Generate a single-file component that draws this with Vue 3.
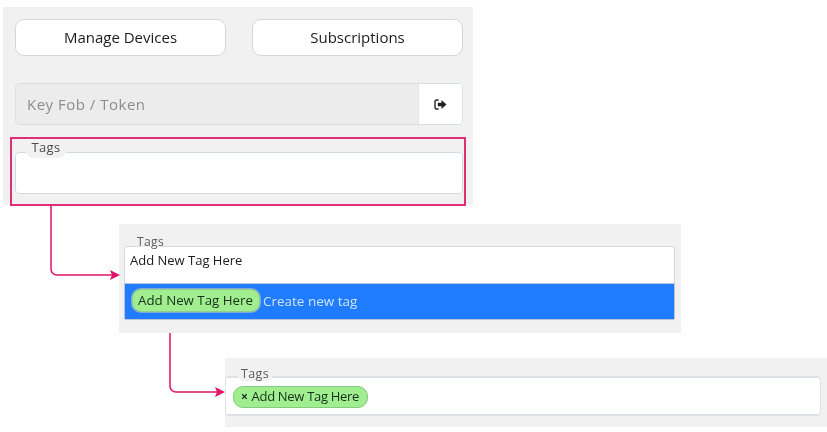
<script setup>
const tag = 'Add New Tag Here'
</script>

<template>
  <div class="page">
    <section class="panel panel-a">
      <div class="btn-row">
        <button class="btn">Manage Devices</button>
        <button class="btn">Subscriptions</button>
      </div>
      <div class="group">
        <div class="token">Key Fob / Token</div>
        <div class="addon">
          <svg width="13" height="11" viewBox="0 0 13 11">
            <path d="M4.600 1H2.600C1.600 1 1 1.700 1 2.600v5.800C1 9.300 1.600 10 2.600 10h2" fill="none" stroke="#222" stroke-width="1.400" />
            <path d="M3.800 3.700h3.700V1l5 4.500-5 4.500V7.300H3.800z" fill="#222" />
          </svg>
        </div>
      </div>
      <fieldset class="tags tags-a">
        <legend>Tags</legend>
      </fieldset>
    </section>

    <section class="panel panel-b">
      <fieldset class="tags tags-b">
        <legend>Tags</legend>
        <div class="typed">{{ tag }}</div>
      </fieldset>
      <div class="option">
        <span class="chip chip-hi">{{ tag }}</span>
        <span>Create new tag</span>
      </div>
    </section>

    <section class="panel panel-c">
      <fieldset class="tags tags-c">
        <legend>Tags</legend>
        <span class="chip chip-final"><b>×</b>{{ tag }}</span>
      </fieldset>
    </section>

    <div class="highlight"></div>
    <svg class="wires" width="827" height="432" viewBox="0 0 827 432">
      <path d="M51 206V269a6 6 0 0 0 6 6H112" />
      <path class="head" d="M110 270l10 5-10 5 2-5z" />
      <path d="M170 333V386a6 6 0 0 0 6 6H217" />
      <path class="head" d="M215 387l10 5-10 5 2-5z" />
    </svg>
  </div>
</template>

<style scoped>
.page {
  position: relative;
  width: 827px;
  height: 432px;
  overflow: hidden;
  background: #fff;
  font-family: "Open Sans", sans-serif;
  filter: blur(0.4px);
}
.panel { background: #f1f1f1; box-sizing: border-box; }
.panel-a {
  width: 470px;
  height: 198px;
  margin: 7px 0 0 3px;
  padding: 12px 10px 0 12px;
  display: flow-root;
}
.btn-row { display: flex; justify-content: space-between; }
.btn {
  width: 211px;
  height: 37px;
  padding: 0 0 2px;
  background: #fff;
  border: 1px solid #d3d7dc;
  border-radius: 9px;
  font: 15px "Open Sans", sans-serif;
  color: #1c1c1c;
}
.group {
  display: flex;
  height: 42px;
  margin-top: 27px;
  box-sizing: border-box;
  border: 1px solid #d8dee4;
  border-radius: 5px;
  overflow: hidden;
}
.token {
  flex: 1;
  background: #ececec;
  color: #8d8d8d;
  font-size: 15px;
  letter-spacing: 0.5px;
  line-height: 40px;
  padding-left: 11px;
}
.addon {
  width: 43px;
  background: #fff;
  border-left: 1px solid #e4e6e8;
  display: flex;
  align-items: center;
  justify-content: center;
}
.tags {
  position: relative;
  margin: 0;
  padding: 0;
  box-sizing: border-box;
  background: #fff;
  border: 1px solid #d2d9e1;
  border-radius: 4px;
  min-width: 0;
}
legend {
  position: absolute;
  font-size: 13px;
  letter-spacing: 0.4px;
  color: #4a4a4a;
  background: #f1f1f1;
  padding: 0;
  border-radius: 0 0 9px 9px;
  text-align: center;
}
.tags-a { height: 42px; margin-top: 27px; }
.tags-a legend { left: 9px; top: -12px; width: 42px; height: 17px; line-height: 12px; }
.panel-b {
  width: 562px;
  height: 109px;
  margin: 19px 0 0 119px;
  padding: 22px 6px 0 5px;
}
.tags-b { height: 37px; padding: 5px 5px 0; border-radius: 3px 3px 0 0; border-bottom: 0; }
.tags-b legend { left: 8px; top: -11px; width: 35px; height: 11px; font-size: 12px; line-height: 12px; color: #5c5c5c; }
.typed { font-size: 13px; line-height: 17px; color: #1c1c1c; }
.option {
  height: 37px;
  box-sizing: border-box;
  display: flex;
  align-items: center;
  gap: 3px;
  padding: 0 0 2px 7px;
  background: #207cff;
  border: 1px solid #b8c4d2;
  border-top-color: #b9cbe4;
  border-radius: 0 0 2px 2px;
  color: #cfe2ff;
  font-size: 13.500px;
}
.chip {
  display: inline-block;
  box-sizing: border-box;
  background: #a0ee90;
  color: #16301a;
  white-space: nowrap;
}
.chip-hi {
  height: 23px;
  line-height: 21px;
  padding: 0 6px 0 5px;
  border-radius: 9px;
  border: 1px solid #8fcf8b;
  box-shadow: 0 0 0 1px #7ea9d8;
  font-size: 13.300px;
}
.panel-c {
  width: 602px;
  height: 69px;
  margin: 25px 0 0 225px;
  padding: 18px 6px 0 0;
}
.tags-c {
  display: flex;
  align-items: flex-start;
  height: 40px;
  padding: 8px 0 0 7px;
  border-width: 2px 1px 2px 1px;
  border-color: #dde1e6;
}
.tags-c legend { left: 10px; top: -11px; width: 38px; height: 14px; font-size: 12.500px; line-height: 14px; color: #5c5c5c; }
.chip-final {
  height: 22px;
  line-height: 19px;
  padding: 0 8px 0 7px;
  border-radius: 10px;
  border: 1px solid #84cc7d;
  font-size: 13px;
  letter-spacing: -0.3px;
}
.chip-final b { margin-right: 4px; font-size: 12px; font-weight: 700; }
.highlight {
  position: absolute;
  left: 10px;
  top: 137px;
  width: 456px;
  height: 69px;
  box-sizing: border-box;
  border: 2px solid #de2f76;
}
.wires { position: absolute; left: 0; top: 0; }
.wires path { fill: none; stroke: #e0126a; stroke-width: 1.500; }
.wires path.head { fill: #e0126a; stroke: none; }
</style>
